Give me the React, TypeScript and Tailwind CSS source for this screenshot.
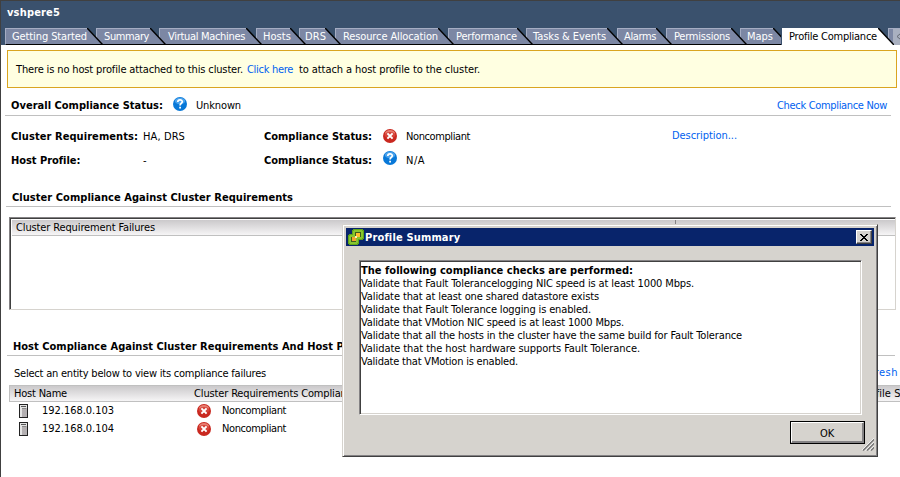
import { useLayoutEffect, useRef, type ReactNode } from "react";

/* Single-line label whose tracking is adjusted so the glyphs fill the given width. */
function Label({ className = "", children }: { className?: string; children: string }) {
  const box = useRef<HTMLDivElement>(null);
  const text = useRef<HTMLSpanElement>(null);
  useLayoutEffect(() => {
    if (!box.current || !text.current) return;
    text.current.style.letterSpacing = "0px";
    const free = box.current.clientWidth - text.current.getBoundingClientRect().width;
    text.current.style.letterSpacing = `${free / children.length}px`;
  }, [children]);
  return (
    <div ref={box} className={`h-[13px] shrink-0 leading-[13px] whitespace-pre ${className}`}>
      <span ref={text}>{children}</span>
    </div>
  );
}

function Slant({ active = false }: { active?: boolean }) {
  return (
    <svg className="h-[17px] w-[16px] shrink-0" viewBox="0 0 16 17">
      <path d="M0 0 L16 17 H0 Z" fill={active ? "#fff" : "#7c87a4"} />
      <path d="M0 0 L16 17" stroke="#000" strokeWidth="1.5" />
      {!active && <path d="M0 16.5 H16" stroke="#000" />}
    </svg>
  );
}

type TabSpec = { label: string; width: string; place: string; text: string };
const tabs: TabSpec[] = [
  { label: "Getting Started", width: "w-[82px] pl-[6px]", place: "-mr-[7px] z-20", text: "w-[75px]" },
  { label: "Summary", width: "w-[54px] pl-[7px]", place: "-mr-[7px] z-19", text: "w-[45px]" },
  { label: "Virtual Machines", width: "w-[87px] pl-[8px]", place: "-mr-[6px] z-18", text: "w-[77px]" },
  { label: "Hosts", width: "w-[34px] pl-[6px]", place: "-mr-[7px] z-17", text: "w-[28px]" },
  { label: "DRS", width: "w-[26px] pl-[5px]", place: "-mr-[6px] z-16", text: "w-[21px]" },
  { label: "Resource Allocation", width: "w-[103px] pl-[7px]", place: "-mr-[6px] z-15", text: "w-[95px]" },
  { label: "Performance", width: "w-[69px] pl-[7px]", place: "-mr-[7px] z-14", text: "w-[61px]" },
  { label: "Tasks & Events", width: "w-[81px] pl-[6px]", place: "-mr-[6px] z-13", text: "w-[73px]" },
  { label: "Alarms", width: "w-[39px] pl-[6px]", place: "-mr-[6px] z-12", text: "w-[32px]" },
  { label: "Permissions", width: "w-[65px] pl-[7px]", place: "-mr-[7px] z-11", text: "w-[56px]" },
  { label: "Maps", width: "w-[33px] pl-[6px]", place: "-mr-[8px] z-10", text: "w-[26px]" },
];

function Tab({ label, width, place, text }: TabSpec) {
  return (
    <div className={`relative flex shrink-0 ${place}`}>
      <div
        className={`relative z-1 h-[17px] shrink-0 border-t border-l border-b border-t-[#a5adc3] border-l-[#a5adc3] border-b-black bg-[#7c87a4] pt-[1px] ${width}`}
      >
        <Label className={text}>{label}</Label>
      </div>
      <Slant />
    </div>
  );
}

function ErrorIcon() {
  return (
    <svg className="h-[14px] w-[14px] shrink-0" viewBox="0 0 14 14">
      <circle cx="7" cy="7" r="7" fill="#c9281f" />
      <ellipse cx="7" cy="4" rx="5" ry="3" fill="#e77d70" />
      <ellipse cx="7" cy="6" rx="5.5" ry="3" fill="#d6443a" />
      <path d="M4.4 4.4 L9.6 9.6 M9.6 4.4 L4.4 9.6" stroke="#fff" strokeWidth="2" />
    </svg>
  );
}

function HelpIcon() {
  return (
    <svg className="h-[14px] w-[14px] shrink-0" viewBox="0 0 14 14">
      <circle cx="7" cy="7" r="7" fill="#0878d8" />
      <ellipse cx="7" cy="4" rx="5.2" ry="3.2" fill="#4ba3ec" />
      <path d="M4.8 5 C4.8 2.2 9.3 2.3 9.3 4.8 C9.3 6.4 7.1 6.2 7.1 8.5" fill="none" stroke="#fff" strokeWidth="1.7" />
      <path d="M6.2 9.8 H8 V11.5 H6.2 Z" fill="#fff" />
    </svg>
  );
}

function HostIcon() {
  return (
    <svg className="h-[14px] w-[9px] shrink-0" viewBox="0 0 9 14" shapeRendering="crispEdges">
      <rect width="9" height="14" fill="#222" />
      <rect x="1" y="1" width="7" height="12" fill="#e4e4e4" />
      <rect x="2" y="2" width="5" height="1" fill="#555" />
      <rect x="3" y="4" width="5" height="9" fill="#b4b0b2" />
      <rect x="3" y="4" width="4" height="1" fill="#888" />
    </svg>
  );
}

function ProductIcon() {
  return (
    <svg className="h-[16px] w-[16px] shrink-0" viewBox="0 0 16 16" shapeRendering="crispEdges">
      <path d="M5 0 H15 V1 H16 V10 H15 V11 H11 V15 H10 V16 H1 V15 H0 V6 H1 V5 H4 V1 H5 Z" fill="#5fa51a" />
      <path d="M6 1 H14 V2 H15 V9 H14 V10 H10 V14 H9 V15 H2 V14 H1 V7 H2 V6 H5 V2 H6 Z" fill="#85c62e" />
      <path d="M7 3 H13 V8 H8 V13 H3 V8 H7 Z" fill="#3d5a1c" />
      <rect x="8" y="4" width="4" height="4" fill="#ffbe2e" />
      <rect x="4" y="8" width="4" height="4" fill="#f0a52c" />
      <rect x="7" y="7" width="2" height="2" fill="#fff0b8" />
    </svg>
  );
}

function Rule({ className }: { className: string }) {
  return <div className={`h-px shrink-0 bg-[#c0c0c0] ${className}`} />;
}

const headBg = "bg-linear-to-b from-[#cbc9cb] to-[#f6f5f6]";

function HostRow({ ip }: { ip: string }) {
  return (
    <div className="flex h-[18px] pl-[18px]">
      <HostIcon />
      <Label className="ml-[14px] w-[72px]">{ip}</Label>
      <div className="ml-[83px] flex">
        <ErrorIcon />
      </div>
      <Label className="ml-[11px] w-[64px]">Noncompliant</Label>
    </div>
  );
}

const checks: { text: string; width: string }[] = [
  { text: "Validate that Fault Tolerancelogging NIC speed is at least 1000 Mbps.", width: "w-[333px]" },
  { text: "Validate that at least one shared datastore exists", width: "w-[238px]" },
  { text: "Validate that Fault Tolerance logging is enabled.", width: "w-[230px]" },
  { text: "Validate that VMotion NIC speed is at least 1000 Mbps.", width: "w-[263px]" },
  { text: "Validate that all the hosts in the cluster have the same build for Fault Tolerance", width: "w-[381px]" },
  { text: "Validate that the host hardware supports Fault Tolerance.", width: "w-[279px]" },
  { text: "Validate that VMotion is enabled.", width: "w-[157px]" },
];

function Bevel({ children, className }: { children?: ReactNode; className: string }) {
  return (
    <div
      className={`flex border border-t-white border-l-white border-r-[#404040] border-b-[#404040] bg-[#d6d3ce] shadow-[inset_-1px_-1px_0_#848284] ${className}`}
    >
      {children}
    </div>
  );
}

function Dialog() {
  return (
    <div className="absolute top-[223px] left-[341px] z-50 flex h-[233px] w-[536px] flex-col border border-t-[#d6d3ce] border-l-[#d6d3ce] border-r-[#404040] border-b-[#404040] bg-[#d6d3ce] px-[3px] pt-[3px] shadow-[inset_1px_1px_0_#fff,inset_-1px_-1px_0_#848284]">
      <div className="flex h-[18px] shrink-0 items-start bg-[#08246b] pl-[2px] text-white">
        <div className="pt-[1px]">
          <ProductIcon />
        </div>
        <Label className="mt-[3px] ml-[1px] w-[95px] font-bold">Profile Summary</Label>
        <Bevel className="mt-[2px] mr-[2px] ml-auto h-[14px] w-[16px] items-center justify-center">
          <svg className="mr-px h-[7px] w-[8px]" viewBox="0 0 8 7" shapeRendering="crispEdges">
            <path d="M0 0h2v1h1v1h2v-1h1v-1h2v1h-1v1h-1v1h-1v1h1v1h1v1h1v1h-2v-1h-1v-1h-2v1h-1v1h-2v-1h1v-1h1v-1h1v-1h-1v-1h-1v-1h-1z" fill="#000" />
          </svg>
        </Bevel>
      </div>
      <div className="mt-[14px] ml-[13px] h-[155px] w-[503px] shrink-0 border border-t-[#848284] border-l-[#848284] border-r-white border-b-white bg-white pt-[3px] pl-[1px] shadow-[inset_1px_1px_0_#404040,inset_-1px_-1px_0_#d6d3ce]">
        <Label className="w-[272px] font-bold">The following compliance checks are performed:</Label>
        {checks.map((c) => (
          <Label key={c.text} className={c.width}>
            {c.text}
          </Label>
        ))}
      </div>
      <div className="flex pt-[6px]">
        <div className="ml-[444px] h-[23px] w-[75px] border border-black">
          <Bevel className="h-[21px] w-[73px] justify-center border-r-[#848284]! border-b-[#848284]! pt-[4px]">
            <Label className="mr-px w-[14px]">OK</Label>
          </Bevel>
        </div>
        <svg className="mt-[17px] -ml-[3px] h-[13px] w-[12px]" viewBox="0 0 12 13">
          <path d="M-.5 12.5 L12 0 M3.5 12.5 L12 4 M7.5 12.5 L12 8" stroke="#fff" />
          <path d="M1 12.5 L12.5 1 M5 12.5 L12.5 5 M9 12.5 L12.5 9" stroke="#777" strokeWidth="1.5" />
        </svg>
      </div>
    </div>
  );
}

export default function App() {
  return (
    <div className="relative flex h-[477px] w-[900px] flex-col overflow-hidden border-t border-l border-[#404040] bg-white font-['DejaVu_Sans_Condensed','DejaVu_Sans',sans-serif] text-[11px] text-black [font-stretch:condensed]">
      <div className="flex h-[44px] shrink-0 flex-col bg-[#3a516d] text-white">
        <Label className="mt-[5px] ml-[6px] w-[53px] font-bold">vshpere5</Label>
        <div className="mt-[9px] ml-[4px] flex h-[17px] w-[895px] overflow-hidden">
          {tabs.map((t) => (
            <Tab key={t.label} {...t} />
          ))}
          <div className="relative z-30 -mr-[6px] flex shrink-0 text-black">
            <div className="w-px bg-[#3a516d]" />
            <div className="h-[17px] w-[96px] shrink-0 bg-white pt-[2px] pl-[7px]">
              <Label className="w-[88px]">Profile Compliance</Label>
            </div>
            <Slant active />
          </div>
          <div className="flex h-[17px] w-[12px] shrink-0 border-t border-l border-[#a5adc3] bg-[#7c87a4]">
            <div className="ml-[4px] h-[16px] w-[7px] bg-[#a9b0c0] pt-[4px] pl-[3px]">
              <svg className="h-[7px] w-[5px]" viewBox="0 0 5 7">
                <path d="M4.5 .5 L1 3.5 L4.5 6.5" fill="none" stroke="#626872" />
              </svg>
            </div>
          </div>
        </div>
      </div>

      <div className="mt-[5px] ml-[6px] flex h-[38px] w-[890px] shrink-0 border border-[#daa520] bg-[#ffffe1] pt-[12px] pl-[8px]">
        <Label className="w-[227px]">There is no host profile attached to this cluster.</Label>
        <Label className="ml-[4px] w-[46px] text-[#0061ef]">Click here</Label>
        <Label className="ml-[6px] w-[181px]">to attach a host profile to the cluster.</Label>
      </div>

      <div className="flex h-[27px] shrink-0 pt-[9px] pl-[10px]">
        <Label className="mt-[2px] w-[152px] font-bold">Overall Compliance Status:</Label>
        <div className="ml-[10px]">
          <HelpIcon />
        </div>
        <Label className="mt-[2px] ml-[9px] w-[45px]">Unknown</Label>
        <Label className="mt-[2px] mr-[13px] ml-auto w-[110px] text-[#0061ef]">Check Compliance Now</Label>
      </div>
      <Rule className="ml-[4px] w-[886px]" />

      <div className="flex h-[24px] shrink-0 pt-[14px] pl-[10px]">
        <Label className="w-[127px] font-bold">Cluster Requirements:</Label>
        <Label className="ml-[5px] w-[42px]">HA, DRS</Label>
        <Label className="ml-[79px] w-[108px] font-bold">Compliance Status:</Label>
        <div className="-mt-[1px] ml-[11px]">
          <ErrorIcon />
        </div>
        <Label className="ml-[9px] w-[64px]">Noncompliant</Label>
        <Label className="-mt-px ml-[202px] w-[65px] text-[#0061ef]">Description...</Label>
      </div>
      <div className="flex h-[24px] shrink-0 pt-[14px] pl-[10px]">
        <Label className="w-[69px] font-bold">Host Profile:</Label>
        <Label className="ml-[63px] w-[5px]">-</Label>
        <Label className="ml-[116px] w-[108px] font-bold">Compliance Status:</Label>
        <div className="-mt-[3px] ml-[11px]">
          <HelpIcon />
        </div>
        <Label className="ml-[9px] w-[19px]">N/A</Label>
      </div>

      <Label className="mt-[27px] ml-[11px] w-[281px] font-bold">Cluster Compliance Against Cluster Requirements</Label>
      <Rule className="mt-[2px] ml-[5px] w-[885px]" />

      <div className="mt-[10px] ml-[8px] h-[93px] w-[887px] shrink-0 border border-t-[#848284] border-l-[#848284] border-r-[#d6d3ce] border-b-[#d6d3ce] pt-[2px] pl-[2px] shadow-[inset_1px_1px_0_#404040]">
        <div className={`flex h-[16px] border-b border-[#c0c0c0] pl-[4px] ${headBg}`}>
          <Label className="mt-px w-[139px]">Cluster Requirement Failures</Label>
          <div className="ml-[520px] h-[14px] w-px bg-[#848284]" />
        </div>
      </div>

      <Label className="mt-[30px] ml-[12px] w-[360px] font-bold">Host Compliance Against Cluster Requirements And Host Profile</Label>
      <Rule className="mt-[2px] ml-[6px] w-[888px]" />
      <div className="flex h-[29px] shrink-0 pt-[11px] pl-[13px]">
        <Label className="w-[252px]">Select an entity below to view its compliance failures</Label>
        <Label className="-mt-px ml-[591px] w-[41px] text-[#0061ef]">Refresh</Label>
      </div>
      <div className={`ml-[8px] flex h-[17px] w-[891px] shrink-0 overflow-hidden border-t border-b border-l border-[#c0c0c0] pt-[1px] ${headBg}`}>
        <Label className="ml-[4px] w-[53px]">Host Name</Label>
        <div className="ml-[121px] h-[14px] w-px bg-[#848284]" />
        <Label className="ml-[6px] w-[164px]">Cluster Requirements Compliance</Label>
        <Label className="ml-[476px] w-[92px]">Host Profile Status</Label>
      </div>
      <div className="pt-[2px]">
        <HostRow ip="192.168.0.103" />
        <HostRow ip="192.168.0.104" />
      </div>
      <Dialog />
    </div>
  );
}
